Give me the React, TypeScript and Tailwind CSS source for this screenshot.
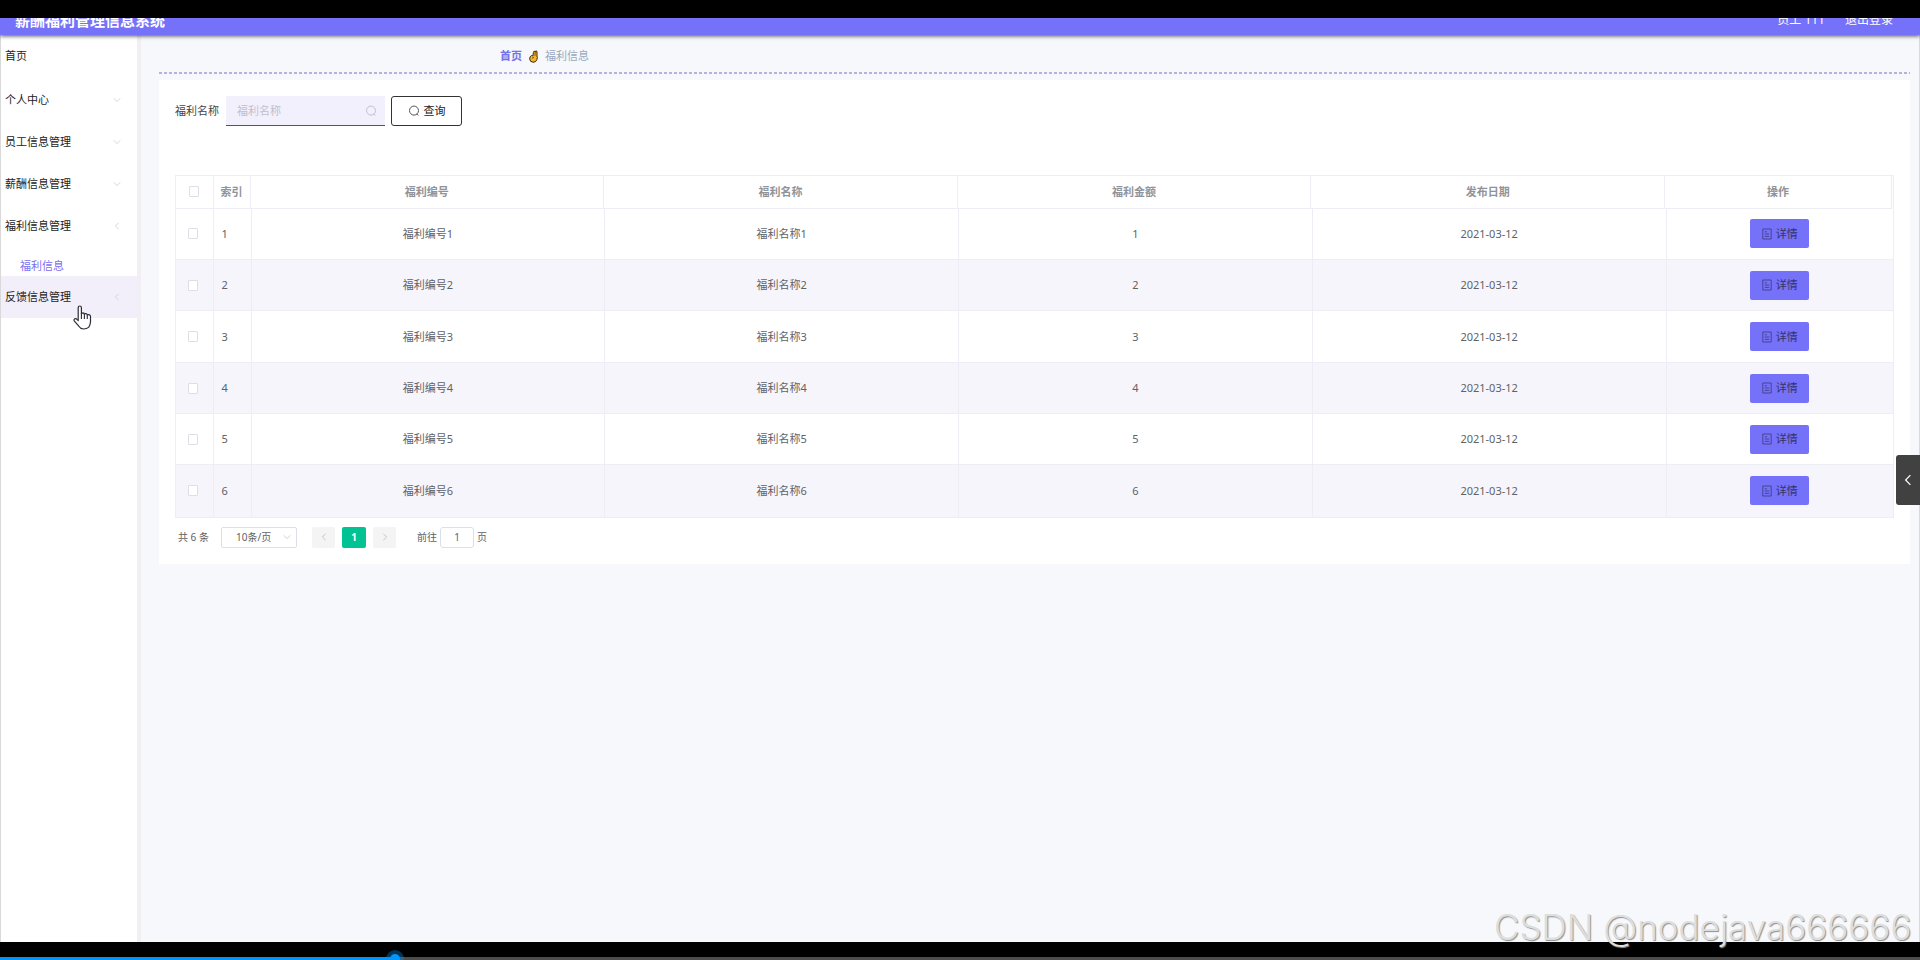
import type { ReactNode } from "react";

type Welfare = {
  id: number;
  date: string;
};

type IconProps = {
  className?: string;
};

const rows: Welfare[] = [
  { id: 1, date: "2021-03-12" },
  { id: 2, date: "2021-03-12" },
  { id: 3, date: "2021-03-12" },
  { id: 4, date: "2021-03-12" },
  { id: 5, date: "2021-03-12" },
  { id: 6, date: "2021-03-12" },
];

const columns = ["福利编号", "福利名称", "福利金额", "发布日期"];

function Chevron({ className }: IconProps) {
  return (
    <svg className={className} viewBox="0 0 10 10" fill="none" stroke="currentColor" aria-hidden="true">
      <path d="M1 3l4 4 4-4" />
    </svg>
  );
}

function SearchIcon({ className }: IconProps) {
  return (
    <svg className={className} viewBox="0 0 12 12" fill="none" stroke="currentColor" aria-hidden="true">
      <circle cx="6" cy="5.6" r="4.5" />
      <path d="M8.8 9l1.6 1.4" />
    </svg>
  );
}

function DocumentIcon({ className }: IconProps) {
  return (
    <svg className={className} viewBox="0 0 10 12" fill="none" stroke="currentColor" strokeWidth="0.7" aria-hidden="true">
      <path d="M0.8 1h8.4v10H0.8zM2.8 3.8h2.2M2.8 6h4.4M2.8 8.4h4.4" />
    </svg>
  );
}

function HandIcon({ className }: IconProps) {
  return (
    <svg className={className} viewBox="0 0 9 13" aria-hidden="true">
      <path
        d="M4.4 2.4Q4.6 1 5.6 1.2L6 2L6.6 1Q7.8.4 8 2L8 6Q8.6 7.4 8 9.4Q7 12.3 4.2 12.3Q.8 12 .7 9Q.6 6.4 2.4 5.6L4 5.8Z"
        fill="#f5b52e"
        stroke="#3b2a14"
        strokeWidth="1"
      />
      <path d="M6.2 2L6 5.8M3 8.2l2-.8" stroke="#3b2a14" strokeWidth="0.7" fill="none" />
    </svg>
  );
}

function PointerIcon({ className }: IconProps) {
  return (
    <svg className={className} viewBox="0 0 19 25" aria-hidden="true">
      <path
        d="M5.2 15.5V2.6Q5.3 1 6.8 1Q8.3 1 8.4 2.6V9Q8.6 7.8 9.9 7.8Q11.3 7.9 11.4 9.4Q11.8 8.4 13 8.6Q14.2 8.8 14.3 10.2Q14.8 9.4 16 9.6Q17.5 10 17.5 11.6V17Q17.3 20 15.6 22.4Q13.6 24 10.6 24Q7.4 23.8 5.8 21.2L1.2 15.8Q.6 14.4 1.8 13.8Q3 13.2 4 14.3Z"
        fill="#fff"
        stroke="#2b2b38"
        strokeWidth="1.2"
        strokeLinejoin="round"
      />
      <path d="M8.4 8.5V14M11.4 9.4V14M14.3 10.2V14" stroke="#2b2b38" strokeWidth="1.1" />
    </svg>
  );
}

type MenuItemProps = {
  children: ReactNode;
  arrow?: string;
  active?: boolean;
};

function MenuItem({ children, arrow, active }: MenuItemProps) {
  return (
    <a
      href="#0"
      className={`flex h-[42px] items-center justify-between pl-1 pr-4 ${active ? "bg-[#f2effb]" : ""}`}>
      <span>{children}</span>
      {arrow && <Chevron className={`h-2 w-2 text-[#c9cbd2] ${arrow}`} />}
    </a>
  );
}

function Checkbox({ label }: { label: string }) {
  return (
    <input
      type="checkbox"
      aria-label={label}
      className="mx-auto block h-[11px] w-[10px] appearance-none rounded-[1px] border border-[#dcdfe6] bg-white"
    />
  );
}

function Sidebar() {
  return (
    <aside className="w-[141px] shrink-0 border-l border-r-4 border-l-[#d9d9d9] border-r-[#f2eff4] bg-white text-[#222]">
      <nav>
        <div className="mb-0.5">
          <MenuItem>首页</MenuItem>
        </div>
        <MenuItem arrow="rotate-0">个人中心</MenuItem>
        <MenuItem arrow="rotate-0">员工信息管理</MenuItem>
        <MenuItem arrow="rotate-0">薪酬信息管理</MenuItem>
        <MenuItem arrow="rotate-90">福利信息管理</MenuItem>
        <a href="#0" className="flex h-[29px] items-center pl-[19px] pt-2 text-[#7a6ff0]">
          福利信息
        </a>
        <MenuItem arrow="rotate-90" active>
          反馈信息管理
        </MenuItem>
      </nav>
    </aside>
  );
}

function SearchForm() {
  return (
    <form className="flex h-[30px] items-center" onSubmit={(e) => e.preventDefault()}>
      <label htmlFor="name" className="text-[#444]">
        福利名称
      </label>
      <div className="relative ml-[7px] h-full w-[159px]">
        <input
          id="name"
          type="text"
          placeholder="福利名称"
          className="h-full w-full border-b border-[#555] bg-[#f3f0fd] pl-[11px] pr-7 outline-none placeholder:text-[#bfbfcb]"
        />
        <SearchIcon className="absolute right-2 top-[9px] h-3 w-3 text-[#bfc2cc]" />
      </div>
      <button
        type="submit"
        className="ml-1.5 flex h-full w-[71px] items-center justify-center gap-1 rounded-[3px] border border-[#333] bg-white text-[#222]">
        <SearchIcon className="h-3 w-3 text-[#555]" />
        查询
      </button>
    </form>
  );
}

function WelfareTable() {
  return (
    <div className="mt-[49px] border border-[#ededf5]">
      {/* Head */}
      <div className="pr-px">
        <table className="w-full table-fixed border-collapse text-[#909399]">
          <thead>
            <tr className="h-8 border-b border-[#ededf5]">
              <th className="w-[37px] border-r border-[#ededf5]">
                <Checkbox label="全选" />
              </th>
              <th className="w-[37px] border-r border-[#ededf5] font-bold">索引</th>
              {columns.map((name) => (
                <th key={name} className="border-r border-[#ededf5] font-bold">
                  {name}
                </th>
              ))}
              <th className="w-[227px] border-r border-[#ededf5] font-bold">操作</th>
            </tr>
          </thead>
        </table>
      </div>
      {/* Body */}
      <table className="w-full table-fixed border-collapse text-center text-[#606266]">
        <colgroup>
          <col className="w-[37px]" />
          <col className="w-[38px]" />
          <col />
          <col />
          <col />
          <col />
          <col className="w-[227px]" />
        </colgroup>
        <tbody className="divide-y divide-[#ededf5]">
          {rows.map((row) => (
            <tr
              key={row.id}
              className="h-[51px] divide-x divide-[#ededf5] even:bg-[#f6f5fc] nth-[3n]:h-[52px]">
              <td className="pr-0.5">
                <Checkbox label={`选择 ${row.id}`} />
              </td>
              <td className="pl-2 text-left">{row.id}</td>
              <td>福利编号{row.id}</td>
              <td>福利名称{row.id}</td>
              <td>{row.id}</td>
              <td>{row.date}</td>
              <td>
                <button
                  type="button"
                  className="mx-auto flex h-[29px] w-[59px] items-center justify-center gap-1 rounded-[2px] bg-[#7571f9] text-[#35336b]">
                  <DocumentIcon className="h-3 w-[10px]" />
                  详情
                </button>
              </td>
            </tr>
          ))}
        </tbody>
      </table>
    </div>
  );
}

function Pagination() {
  return (
    <div className="mt-[9px] flex h-[21px] items-center pl-[3px] text-[10px] text-[#606266]">
      <span className="w-[43px]">共 6 条</span>
      <div className="relative h-full w-[76px]">
        <select
          aria-label="每页条数"
          className="h-full w-full appearance-none rounded-[2px] border border-[#dcdfe6] bg-white pl-3.5">
          <option>10条/页</option>
        </select>
        <Chevron className="pointer-events-none absolute right-1.5 top-1.5 h-2 w-2 text-[#c0c4cc]" />
      </div>
      <button
        type="button"
        aria-label="上一页"
        className="ml-[15px] flex h-full w-[23px] items-center justify-center rounded-[2px] bg-[#f4f4f5] text-[#b5b8c0]">
        <Chevron className="h-2 w-2 rotate-90" />
      </button>
      <button type="button" className="ml-[7px] h-full w-6 rounded-[2px] bg-[#00c292] font-bold text-white">
        1
      </button>
      <button
        type="button"
        aria-label="下一页"
        className="ml-[7px] flex h-full w-[23px] items-center justify-center rounded-[2px] bg-[#f4f4f5] text-[#b5b8c0]">
        <Chevron className="h-2 w-2 -rotate-90" />
      </button>
      <label htmlFor="page" className="ml-[21px]">
        前往
      </label>
      <input
        id="page"
        type="text"
        defaultValue="1"
        className="mx-[3px] h-full w-[34px] rounded-[3px] border border-[#dcdfe6] bg-white text-center"
      />
      <span>页</span>
    </div>
  );
}

export default function App() {
  return (
    <div className="relative flex h-screen flex-col overflow-hidden bg-black pt-[18px] font-['Noto_Sans','Noto_Sans_CJK_SC',sans-serif] text-[11px] leading-4">
      {/* Header */}
      <header className="relative z-10 h-[17px] shrink-0 bg-[#7571f9] shadow-[0_1px_4px_rgba(0,0,0,0.7)]">
        <div className="flex h-full items-end justify-between overflow-hidden pb-[7px] pl-[15px] pr-[27px] text-white">
          <h1 className="text-[15px] font-bold leading-4">薪酬福利管理信息系统</h1>
          <div className="flex gap-5 text-xs leading-4">
            <span>员工 111</span>
            <a href="#0">退出登录</a>
          </div>
        </div>
      </header>

      <div className="flex min-h-0 flex-1 border-r border-[#d9d9d9] bg-[#f6f8fc]">
        <Sidebar />
        <main className="min-w-0 flex-1 pl-[18px] pr-[9px]">
          {/* Breadcrumb */}
          <div className="flex h-[37px] items-center gap-[7px] pl-[341px] pt-[5px]">
            <a href="#0" className="font-bold text-[#7571e8]">
              首页
            </a>
            <HandIcon className="h-[13px] w-[9px]" />
            <span className="text-[#97a8be]">福利信息</span>
          </div>
          <div className="h-[2px] bg-[repeating-linear-gradient(90deg,#b9b0e2_0_3px,transparent_3px_5px)]" />

          <section className="mt-1.5 bg-white p-4">
            <SearchForm />
            <WelfareTable />
            <Pagination />
          </section>
        </main>
      </div>

      {/* Player bar */}
      <div className="flex h-[18px] shrink-0 items-end">
        <input
          type="range"
          aria-label="播放进度"
          min={0}
          max={1000}
          defaultValue={204}
          className="h-[3px] w-full appearance-none bg-[linear-gradient(90deg,#0095ff_20.6%,#4d4d4d_20.6%)] [&::-webkit-slider-thumb]:h-[10px] [&::-webkit-slider-thumb]:w-[10px] [&::-webkit-slider-thumb]:appearance-none [&::-webkit-slider-thumb]:rounded-full [&::-webkit-slider-thumb]:bg-[#0095ff] [&::-webkit-slider-thumb]:shadow-[0_0_0_4px_rgba(0,149,255,0.35)]"
        />
      </div>

      <PointerIcon className="absolute left-[73px] top-[305px] z-20 h-[25px] w-[19px]" />

      <button
        type="button"
        aria-label="展开"
        className="absolute right-0 top-[455px] flex h-[50px] w-6 items-center justify-center rounded-l-[3px] bg-[#414141] text-white">
        <Chevron className="h-3 w-3 rotate-90" />
      </button>

      <p className="pointer-events-none absolute bottom-3 left-[1494px] whitespace-nowrap font-['Inter',sans-serif] text-[35px] font-light leading-[42px] text-[#dedede] [text-shadow:1px_1px_1px_#8f8f8f]">
        CSDN @nodejava666666
      </p>
    </div>
  );
}
